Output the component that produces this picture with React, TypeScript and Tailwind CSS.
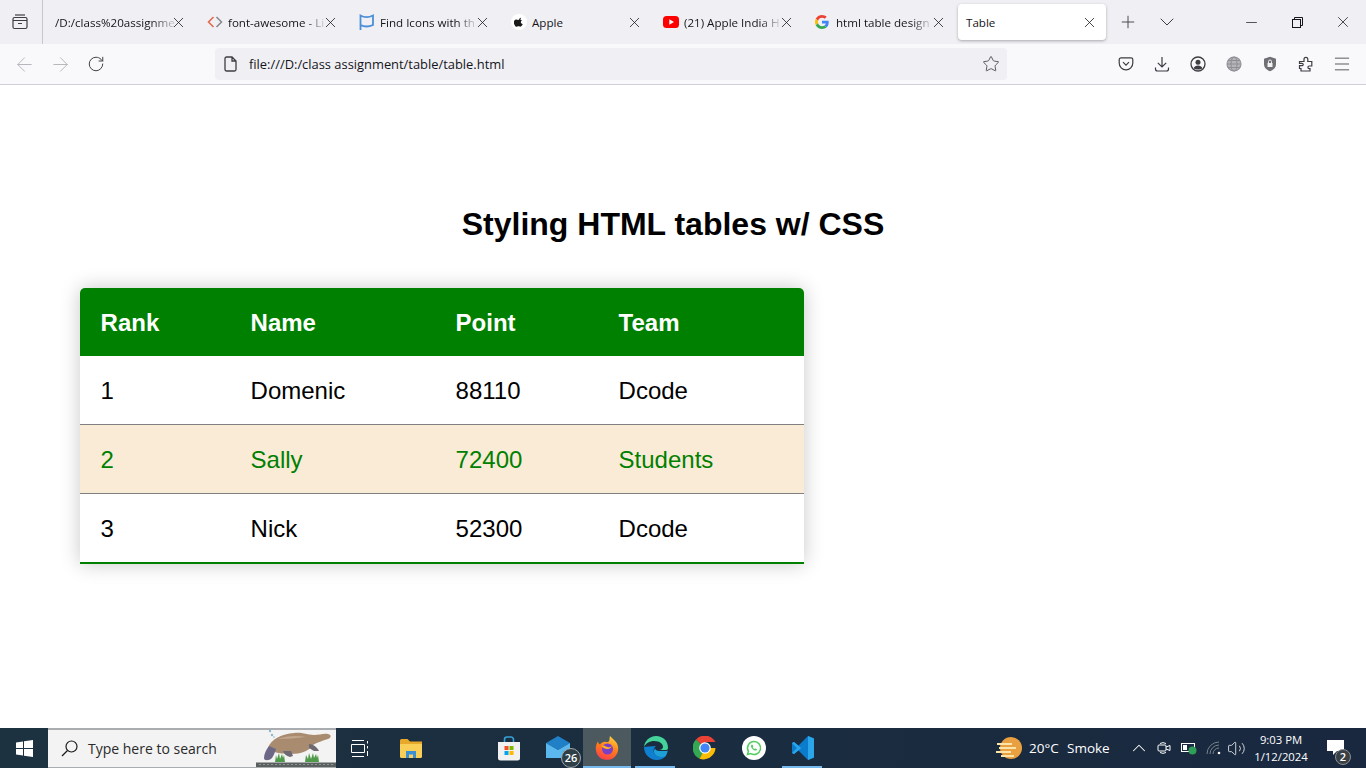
import React from 'react'
import { ArrowLeft, ArrowRight, ChevronDown, ChevronUp, Menu, Minus, Plus, RotateCw, Star, Volume2, X } from 'lucide-react'

const uiFont = "font-['Open_Sans',sans-serif]"

const GoogleIcon = () => (
  <svg width="14" height="14" viewBox="0 0 48 48">
    <path fill="#EA4335" d="M24 9.500c3.500 0 6.700 1.200 9.200 3.600l6.900-6.900C35.900 2.400 30.500 0 24 0 14.600 0 6.500 5.400 2.600 13.200l8 6.200C12.500 13.600 17.800 9.500 24 9.500z" />
    <path fill="#4285F4" d="M47 24.500c0-1.600-.1-3.100-.4-4.500H24v9h12.900c-.6 3-2.200 5.500-4.700 7.200l7.700 6C44.400 38 47 31.800 47 24.500z" />
    <path fill="#FBBC05" d="M10.600 28.600C10.100 27.200 9.800 25.600 9.800 24s.3-3.200.8-4.600l-8-6.200C.9 16.400 0 20.100 0 24s.9 7.600 2.600 10.800l8-6.200z" />
    <path fill="#34A853" d="M24 48c6.500 0 11.900-2.100 15.900-5.800l-7.700-6c-2.200 1.400-4.900 2.300-8.200 2.300-6.200 0-11.500-4.100-13.400-9.900l-8 6.200C6.500 42.600 14.600 48 24 48z" />
  </svg>
)

const CodeIcon = () => (
  <svg width="16" height="16" viewBox="0 0 16 16" fill="none" strokeWidth="1.600">
    <path d="M6.500 3 1.500 8l5 5" stroke="#e2694f" />
    <path d="M9.500 3l5 5-5 5" stroke="#8a8a8e" />
  </svg>
)

const FlagIcon = () => (
  <svg width="16" height="16" viewBox="0 0 16 16" fill="none" stroke="#4a8fd8" strokeWidth="1.800">
    <path d="M1.500 16V1.500C5 3.500 10 3.500 14 1.500v9.500c-4 1.800-9 1.800-12.500 0" />
  </svg>
)

const AppleIcon = () => (
  <span className="flex h-4 w-4 items-center justify-center rounded-full bg-white">
    <svg width="10" height="10" viewBox="0 0 16 16" fill="#1a1a1a">
      <path d="M11.200 1c.1 1-.3 1.900-.8 2.600-.6.700-1.500 1.200-2.300 1.100-.1-.9.300-1.900.8-2.500C9.500 1.500 10.500 1 11.200 1zM14 11.300c-.4.900-.6 1.300-1.100 2-.7 1-1.700 2.300-2.900 2.300-1.100 0-1.400-.7-2.900-.7s-1.800.7-2.900.7C3 15.600 2.100 14.400 1.400 13.400-.5 10.700-.7 7.500.4 5.800c.8-1.200 2-1.900 3.200-1.900s2 .7 3 .7 1.600-.7 3-.7c1.100 0 2.200.6 3 1.600-2.600 1.400-2.200 5.100 1.400 5.800z" />
    </svg>
  </span>
)

const YoutubeIcon = () => (
  <svg width="16" height="16" viewBox="0 0 16 16">
    <rect x="0" y="2" width="16" height="12" rx="3.500" fill="#f00" />
    <path d="M6.300 5.300v5.400L11 8z" fill="#fff" />
  </svg>
)

// titles as far as they are readable in the tab strip
const tabs = [
  { title: '/D:/class%20assignme', icon: null, fade: true },
  { title: 'font-awesome - Li', icon: <CodeIcon />, fade: true },
  { title: 'Find Icons with th', icon: <FlagIcon />, fade: true },
  { title: 'Apple', icon: <AppleIcon />, fade: false },
  { title: '(21) Apple India H', icon: <YoutubeIcon />, fade: true },
  { title: 'html table design', icon: <GoogleIcon />, fade: true },
]

const FirefoxView = () => (
  <svg width="16" height="16" viewBox="0 0 16 16" fill="none" stroke="#3d3d42" strokeWidth="1.200">
    <path d="M3 1h10" />
    <rect x="1" y="3.500" width="14" height="11" rx="1.500" />
    <path d="M1 6.500h14M6 9.500h4" />
  </svg>
)

const TabBar = () => (
  <div className="flex h-11 shrink-0 items-center bg-[#f0f0f4]">
    <div className="flex h-11 w-[43px] shrink-0 items-center justify-center border-r border-[#c8c8cc] pr-[3px]">
      <FirefoxView />
    </div>
    <div className="ml-px flex">
      {tabs.map((tab) => (
        <div key={tab.title} className="flex h-9 w-[152px] items-center pr-[9px] pl-[11px]">
          {tab.icon && <span className="mr-[5px] flex w-4 shrink-0 items-center justify-start">{tab.icon}</span>}
          <span className="min-w-0 flex-1 pt-px text-[11.600px] whitespace-nowrap text-[#15141a]">
            <span className={tab.fade ? 'inline-block [mask-image:linear-gradient(to_right,black_80%,rgba(0,0,0,0.15))]' : 'inline-block'}>{tab.title}</span>
          </span>
          <X size={17} strokeWidth={1.100} className="shrink-0 text-[#15141a]" />
        </div>
      ))}
    </div>
    <div className="ml-[2px] flex h-9 w-[148px] items-center rounded bg-white pr-[8px] pl-[8px] shadow-[0_1px_3px_rgba(0,0,0,0.3)]">
      <span className="flex-1 pt-px text-[11.600px] text-[#15141a]">Table</span>
      <X size={17} strokeWidth={1.100} className="text-[#15141a]" />
    </div>
    <Plus size={20} strokeWidth={1.100} className="ml-[12px] text-[#3d3d42]" />
    <ChevronDown size={24} strokeWidth={1} className="ml-[17px] text-[#3d3d42]" />
    <div className="ml-auto flex items-center">
      <div className="flex w-[46px] justify-center"><Minus size={17} strokeWidth={1} className="text-[#15141a]" /></div>
      <div className="flex w-[46px] justify-center">
        <svg width="11" height="11" viewBox="0 0 11 11" fill="none" stroke="#15141a">
          <rect x="0.500" y="2.500" width="8" height="8" />
          <path d="M2.500 2.500v-2h8v8h-2" />
        </svg>
      </div>
      <div className="flex w-[46px] justify-center"><X size={18} strokeWidth={1} className="text-[#15141a]" /></div>
    </div>
  </div>
)

const navBtn = 'flex h-8 w-9 shrink-0 items-center justify-center'

const NavBar = () => (
  <div className="flex h-[41px] shrink-0 items-center border-b border-[#cfcfd8] bg-[#f9f9fb]">
    <div className="flex w-[215px] shrink-0 pl-[6px]">
      <div className={navBtn}><ArrowLeft size={23} strokeWidth={1} className="text-[#b4b4ba]" /></div>
      <div className={navBtn}><ArrowRight size={23} strokeWidth={1} className="text-[#b4b4ba]" /></div>
      <div className={navBtn}><RotateCw size={18} strokeWidth={1.300} className="text-[#3d3d42]" /></div>
    </div>
    <div className="flex h-8 w-[792px] items-center rounded bg-[#f0f0f4] pr-[7px] pl-[9px]">
      <svg width="14" height="16" viewBox="0 0 14 16" fill="none" stroke="#3d3d42" strokeWidth="1.300">
        <path d="M2.500 1h5.500l4 4v8.500a1.500 1.500 0 0 1-1.500 1.500h-8A1.500 1.500 0 0 1 1 13.500v-11A1.500 1.500 0 0 1 2.500 1zM8 1v4h4" />
      </svg>
      <span className="ml-[11px] flex-1 pt-px text-[12.900px] text-[#15141a]">file:///D:/class assignment/table/table.html</span>
      <Star size={18} strokeWidth={1.100} className="text-[#3d3d42]" />
    </div>
    <div className="ml-[101px] flex items-center">
      <div className={navBtn}>
        <svg width="16" height="16" viewBox="0 0 16 16" fill="none" stroke="#3d3d42" strokeWidth="1.200">
          <path d="M3 1.800h10A1.800 1.800 0 0 1 14.800 3.600V7A6.800 6.800 0 0 1 1.200 7V3.600A1.800 1.800 0 0 1 3 1.800z" />
          <path d="M5 6.200 8 9.200l3-3" />
        </svg>
      </div>
      <div className={navBtn}>
        <svg width="16" height="16" viewBox="0 0 16 16" fill="none" stroke="#3d3d42" strokeWidth="1.200">
          <path d="M8 1v10M3.800 6.800 8 11l4.200-4.200" />
          <path d="M1.500 11.500v1.500a2 2 0 0 0 2 2h9a2 2 0 0 0 2-2v-1.500" />
        </svg>
      </div>
      <div className={navBtn}>
        <svg width="16" height="16" viewBox="0 0 16 16">
          <circle cx="8" cy="8" r="7" fill="none" stroke="#3d3d42" strokeWidth="1.300" />
          <circle cx="8" cy="6.300" r="2.500" fill="#3d3d42" />
          <path d="M3.500 12.300c1-2 2.500-2.800 4.500-2.800s3.500.8 4.500 2.800C11 14 5 14 3.500 12.300z" fill="#3d3d42" />
        </svg>
      </div>
      <div className={navBtn}>
        <svg width="16" height="16" viewBox="0 0 16 16" fill="none" stroke="#8f8f94" strokeWidth="1.100">
          <circle cx="8" cy="8" r="7" fill="#b5b5b9" />
          <ellipse cx="8" cy="8" rx="3" ry="7" />
          <path d="M1 8h14M2 4.500h12M2 11.500h12" />
        </svg>
      </div>
      <div className={navBtn}>
        <svg width="16" height="16" viewBox="0 0 16 16">
          <path d="M8 .8 14 2.800V8c0 3.500-2.500 6-6 7.300C4.500 14 2 11.500 2 8V2.800z" fill="#6f6f75" />
          <rect x="5.500" y="7" width="5" height="4" fill="#f2f2f2" />
          <path d="M6.500 7V5.500a1.500 1.500 0 0 1 3 0V7" fill="none" stroke="#f2f2f2" />
        </svg>
      </div>
      <div className={navBtn}>
        <svg width="16" height="16" viewBox="0 0 16 16" fill="none" stroke="#3d3d42" strokeWidth="1.200">
          <path d="M1.500 5.500H6V3.200a1.900 1.900 0 0 1 3.800 0V5.500h4V10h-2.600a1.300 1.300 0 0 0 0 2.600H12V15H3v-2.500H1.500v-2.800H4a1.200 1.200 0 0 0 0-2.400H1.500z" />
        </svg>
      </div>
      <div className={navBtn}><Menu size={20} strokeWidth={1} className="text-[#3d3d42]" /></div>
    </div>
  </div>
)

const rows = [
  { rank: 1, name: 'Domenic', point: 88110, team: 'Dcode' },
  { rank: 2, name: 'Sally', point: 72400, team: 'Students' },
  { rank: 3, name: 'Nick', point: 52300, team: 'Dcode' },
]

const cell = 'pt-[21px] pb-[19px] pl-[20.600px] text-left align-middle leading-[28px]'

const ScoreTable = () => (
  <div className="ml-20 w-[724px] overflow-hidden rounded-t-[5px] shadow-[0_0_20px_rgba(0,0,0,0.22)]">
    <table className="w-full table-fixed border-separate border-spacing-0 text-[24px]">
      <colgroup>
        <col className="w-[150px]" />
        <col className="w-[205px]" />
        <col className="w-[163px]" />
        <col className="w-[206px]" />
      </colgroup>
      <thead>
        <tr className="bg-[#008000] font-bold text-white">
          <th className={cell}>Rank</th>
          <th className={cell}>Name</th>
          <th className={cell}>Point</th>
          <th className={cell}>Team</th>
        </tr>
      </thead>
      <tbody>
        {rows.map((row, i) => {
          const line = i === 2 ? 'border-b-2 border-[#008000]' : 'border-b border-[#808080]'
          return (
            <tr key={row.rank} className={i === 1 ? 'bg-[#faebd7] text-[#008000]' : 'bg-white text-black'}>
              <td className={`${cell} ${line}`}>{row.rank}</td>
              <td className={`${cell} ${line}`}>{row.name}</td>
              <td className={`${cell} ${line}`}>{row.point}</td>
              <td className={`${cell} ${line}`}>{row.team}</td>
            </tr>
          )
        })}
      </tbody>
    </table>
  </div>
)

const Platypus = () => (
  <svg width="80" height="40" viewBox="0 0 80 40" className="absolute right-0 bottom-0">
    <circle cx="14" cy="4" r="1.200" fill="#8fb4c9" />
    <circle cx="16" cy="8" r="1.200" fill="#8fb4c9" />
    <circle cx="18" cy="10" r="0.800" fill="#8fb4c9" />
    <path d="M12 21C15 12 26 7 38 6c9-1 12 2 20 2 5 0 10-2 14-1 4 1 3 4 0 5-6 2-10 3-15 6-4 6-12 9-22 9-6 0-14-1-17-2z" fill="#a98b70" />
    <path d="M22 12c8-3 18-4 28-2-8 1-19 2-28 2z" fill="#c2a78d" />
    <path d="M13 19c-3 4-5 8-5 12 0 3 5 3 8 0 2-3 3-6 4-9z" fill="#6b6785" />
    <path d="M27 24c1 3 3 5 7 6l3-1-2-5zM53 17c4 0 8 3 10 7l-5 0-5-3z" fill="#6e6873" />
    <path d="M19 35l1-7 1 4 2-6 1 6 2-5 1 4 1-3 1 7zM49 35l1-7 2 4 1-6 2 6 2-6 1 5 2-4 1 4 1-3 1 7z" fill="#4f9a4a" />
    <path d="M0 35.500h80V40H0z" fill="#5a6060" />
    <path d="M3 37.500h74" stroke="#8d9590" strokeDasharray="2 2" />
  </svg>
)

const Slot = ({ children, active, line, badge, className = '' }: { children?: React.ReactNode; active?: boolean; line?: string; badge?: string; className?: string }) => (
  <div className={`relative flex h-10 shrink-0 items-center justify-center ${active ? 'bg-[#4c5a60]' : ''} ${className || 'w-[49px]'}`}>
    {children}
    {line && <span className={`absolute bottom-0 h-[2px] bg-[#76b9ed] ${line}`} />}
    {badge && (
      <span className="absolute top-[20px] right-[2px] flex h-[20px] w-[20px] items-center justify-center rounded-full border border-[#a0a8ad] bg-[#2f3f48] text-[11px] font-semibold text-white">
        {badge}
      </span>
    )}
  </div>
)

const Taskbar = () => (
  <div className="flex h-10 shrink-0 items-center bg-linear-to-r from-[#1c3240] to-[#19283f] text-white">
    <div className="flex h-10 w-12 shrink-0 items-center justify-center">
      <svg width="17" height="17" viewBox="0 0 17 17" fill="#fff">
        <path d="M0 2.400 7 1.400V8H0zM8 1.300 17 0v8H8zM0 9h7v6.600L0 14.600zM8 9h9v8L8 15.700z" />
      </svg>
    </div>
    <div className="relative flex h-10 w-[288px] shrink-0 items-center border-t-2 border-b border-[#a9adb0] bg-[#f3f3f3] pl-[13px]">
      <svg width="17" height="17" viewBox="0 0 17 17" fill="none" stroke="#1a1a1a" strokeWidth="1.200">
        <circle cx="10.500" cy="6.500" r="5.500" />
        <path d="M6.500 10.500 1 16" />
      </svg>
      <span className="ml-[10px] text-[14px] text-[#2a2a2a]">Type here to search</span>
      <Platypus />
    </div>
    <Slot>
      <svg width="19" height="17" viewBox="0 0 19 17" fill="none" stroke="#fff">
        <path d="M1 .500h12M1 16.500h12M.500 4.500h13v8H.500zM16.500 1v2.500M16.500 6v2.500M16.500 11v5" />
      </svg>
    </Slot>
    <Slot>
      <svg width="22" height="19" viewBox="0 0 22 19" className="translate-x-[1px]">
        <path d="M0 1.500A1.500 1.500 0 0 1 1.500 0h6L10 2.500h12V5H0z" fill="#e8a92b" />
        <path d="M0 5h22v12.500a1.500 1.500 0 0 1-1.500 1.500h-19A1.500 1.500 0 0 1 0 17.500z" fill="#f9cf57" />
        <path d="M6 19v-7h10v7h-3v-3.500H9V19z" fill="#3c8fd4" />
      </svg>
    </Slot>
    <Slot className="w-[51px]" />
    <Slot>
      <svg width="24" height="25" viewBox="0 0 24 25" className="-translate-x-[1px]">
        <path d="M7.500 7V3.500A2.500 2.500 0 0 1 10 1h4a2.500 2.500 0 0 1 2.500 2.500V7" fill="none" stroke="#36a2d8" strokeWidth="1.600" />
        <path d="M1 6h22v16a2.500 2.500 0 0 1-2.500 2.500h-17A2.500 2.500 0 0 1 1 22z" fill="#f1f1f1" />
        <rect x="7.500" y="10" width="4" height="4" fill="#f25022" />
        <rect x="12.500" y="10" width="4" height="4" fill="#7fba00" />
        <rect x="7.500" y="15" width="4" height="4" fill="#00a4ef" />
        <rect x="12.500" y="15" width="4" height="4" fill="#ffb900" />
      </svg>
    </Slot>
    <Slot badge="26">
      <svg width="24" height="24" viewBox="0 0 24 24" className="-translate-x-[1px]">
        <path d="M0 7 12 0l12 7-12 7z" fill="#1f7fc7" />
        <path d="M0 7l12 7 12-7v15H0z" fill="#5ab8ee" />
      </svg>
    </Slot>
    <Slot active line="left-0 w-full" className="w-[48px]">
      <svg width="24" height="24" viewBox="0 0 24 24">
        <defs>
          <linearGradient id="ffFlame" x1="0.700" y1="0" x2="0.300" y2="1">
            <stop offset="0" stopColor="#ffd43a" />
            <stop offset="0.500" stopColor="#ff7a1a" />
            <stop offset="1" stopColor="#ff3c4e" />
          </linearGradient>
        </defs>
        <path d="M15 0c1.500 2 5 4 7 7.500 2.500 5 1 11-3.500 14.500C13 25.500 5 24 2 18 0 14 .500 8.500 3 5.500c.3 1.500.8 2.500 2 3 1.500-2 4-3 6-2.500 1.800.4 3.500-.5 3.500-2.500 0-1.300.2-2.500.5-3.500z" fill="url(#ffFlame)" />
        <circle cx="12.500" cy="13" r="5.500" fill="#7a3fc8" />
        <path d="M6.500 10c2.500-1.500 4 .8 6.500 1.200 1.500.2 3-.4 4-1.500-.5 1.500-1.500 2.500-3 3-2.500.7-5.500-.2-7.500-2.700z" fill="#ffb31f" />
      </svg>
    </Slot>
    <Slot line="left-[4px] w-[40px]">
      <svg width="24" height="24" viewBox="0 0 24 24">
        <path d="M12 0C5.500 0 .5 5 0 11c2-4 6-6 10-6 6 0 9 3 9 6 0 2-2 3-4 3h7c1.500 0 2-1 2-2.500C24 5 19 0 12 0z" fill="#44d49a" />
        <path d="M0 11C0 18.500 6 24 12.500 24c3.500 0 6.500-1 9-3.500-3 1-8 1-10.500-2-2-2.500-2-6 1-8.500-5 0-9.500 1-12 1z" fill="#0f7fd0" />
        <path d="M24 12c0 3-1 6-2.500 8.500-3 1-8 1-10.500-2-1.500-2-1.500-4 0-6 .5 1.500 2 2.500 4 2.500h9z" fill="#1d9fd8" />
      </svg>
    </Slot>
    <Slot>
      <svg width="24" height="24" viewBox="0 0 24 24">
        <path d="M12 12 3 3.500A12 12 0 0 1 22.500 6H12z" fill="#ea4335" />
        <path d="M12 12 6.500 22.700A12 12 0 0 1 3 3.500z" fill="#34a853" />
        <path d="M12 12h10.500A12 12 0 0 1 6.500 22.700z" fill="#fbbc05" />
        <circle cx="12" cy="12" r="5.800" fill="#fff" />
        <circle cx="12" cy="12" r="4.600" fill="#4285f4" />
      </svg>
    </Slot>
    <Slot>
      <svg width="24" height="24" viewBox="0 0 24 24">
        <circle cx="12" cy="12" r="12" fill="#fff" />
        <path d="M12 5.500a6.500 6.500 0 0 0-5.600 9.800l-.9 3.200 3.300-.9A6.500 6.500 0 1 0 12 5.500z" fill="none" stroke="#4fce5d" strokeWidth="1.500" />
        <path d="M9.500 8.800c-.8.700-.7 2 .4 3.400 1.100 1.500 2.700 2.500 3.700 2.400 1-.1 1.500-.9 1.400-1.400l-1.600-.8-.7.700c-.8-.3-1.500-1-2-1.900l.6-.7-.7-1.700z" fill="#4fce5d" />
      </svg>
    </Slot>
    <Slot line="left-[4px] w-[40px]">
      <svg width="24" height="24" viewBox="0 0 24 24">
        <path d="M17 0 7.500 9.500 3 6 1 7v10l2 1 4.500-3.500L17 24l6-2.500v-19z" fill="#0a7ccb" />
        <path d="M17 0l6 2.500v19L17 24V6.500L10 12 3 6 1 7l5 5-5 5 2 1 14-11.500z" fill="#2ba6ea" />
      </svg>
    </Slot>
    <div className="ml-auto flex h-10 items-center">
      <svg width="26" height="24" viewBox="0 0 26 24" className="mr-[7px]">
        <circle cx="15" cy="12" r="11" fill="#e8a040" />
        <path d="M1 8h15M3 12h17M0 16h15M5 20h13" stroke="#fce3a8" strokeWidth="2" />
      </svg>
      <span className="w-[38px] text-[13.500px]">20°C</span>
      <span className="w-[61px] text-[13.500px]">Smoke</span>
      <ChevronUp size={22} strokeWidth={1.100} />
      <svg width="14" height="16" viewBox="0 0 14 16" fill="none" stroke="#fff" className="ml-[7px]">
        <path d="M3 3.500a6 6 0 0 1 6 0M3 12.500a6 6 0 0 0 6 0" />
        <rect x="1" y="5" width="8" height="6" rx="1" />
        <path d="M9 7l4-1.500v5L9 9" />
      </svg>
      <svg width="16" height="14" viewBox="0 0 16 14" className="ml-[10px]">
        <rect x="0.500" y="2.500" width="13" height="8" fill="none" stroke="#fff" />
        <rect x="2" y="4" width="4" height="5" fill="#fff" />
        <circle cx="11.500" cy="9.500" r="4" fill="#2f9e58" />
      </svg>
      <svg width="16" height="14" viewBox="0 0 16 14" fill="none" stroke="#79838c" className="ml-[9px]">
        <path d="M1 13A12 12 0 0 1 13 1M4 13a9 9 0 0 1 9-9M7 13a6 6 0 0 1 6-6" />
        <circle cx="13" cy="12" r="1.300" fill="#fff" stroke="none" />
      </svg>
      <Volume2 size={19} strokeWidth={1} className="ml-[5px]" />
      <div className="flex w-[70px] flex-col items-center text-[11.300px] leading-[17px]">
        <span>9:03 PM</span>
        <span>1/12/2024</span>
      </div>
      <div className="relative mr-[22px] ml-[6px] flex h-10 w-[22px] items-start justify-end pt-[12px]">
        <svg width="17" height="15" viewBox="0 0 17 15" fill="#fff">
          <path d="M0 0h17v11H10l-4 4v-4H0z" />
        </svg>
        <span className="absolute top-[21px] left-[13px] flex h-[16px] w-[16px] items-center justify-center rounded-full border border-[#8a8f93] bg-[#3a3f44] text-[11px] font-semibold">2</span>
      </div>
    </div>
  </div>
)

const App = () => {
  return (
    <div className={`flex h-screen w-full flex-col overflow-hidden ${uiFont}`}>
      <TabBar />
      <NavBar />
      <main className="min-h-0 flex-1 bg-white pt-[121px] font-['Liberation_Sans',sans-serif] text-black">
        <h1 className="mb-[45px] w-[1346px] text-center text-[32px] leading-[37px] font-bold">Styling HTML tables w/ CSS</h1>
        <ScoreTable />
      </main>
      <Taskbar />
    </div>
  )
}

export default App
